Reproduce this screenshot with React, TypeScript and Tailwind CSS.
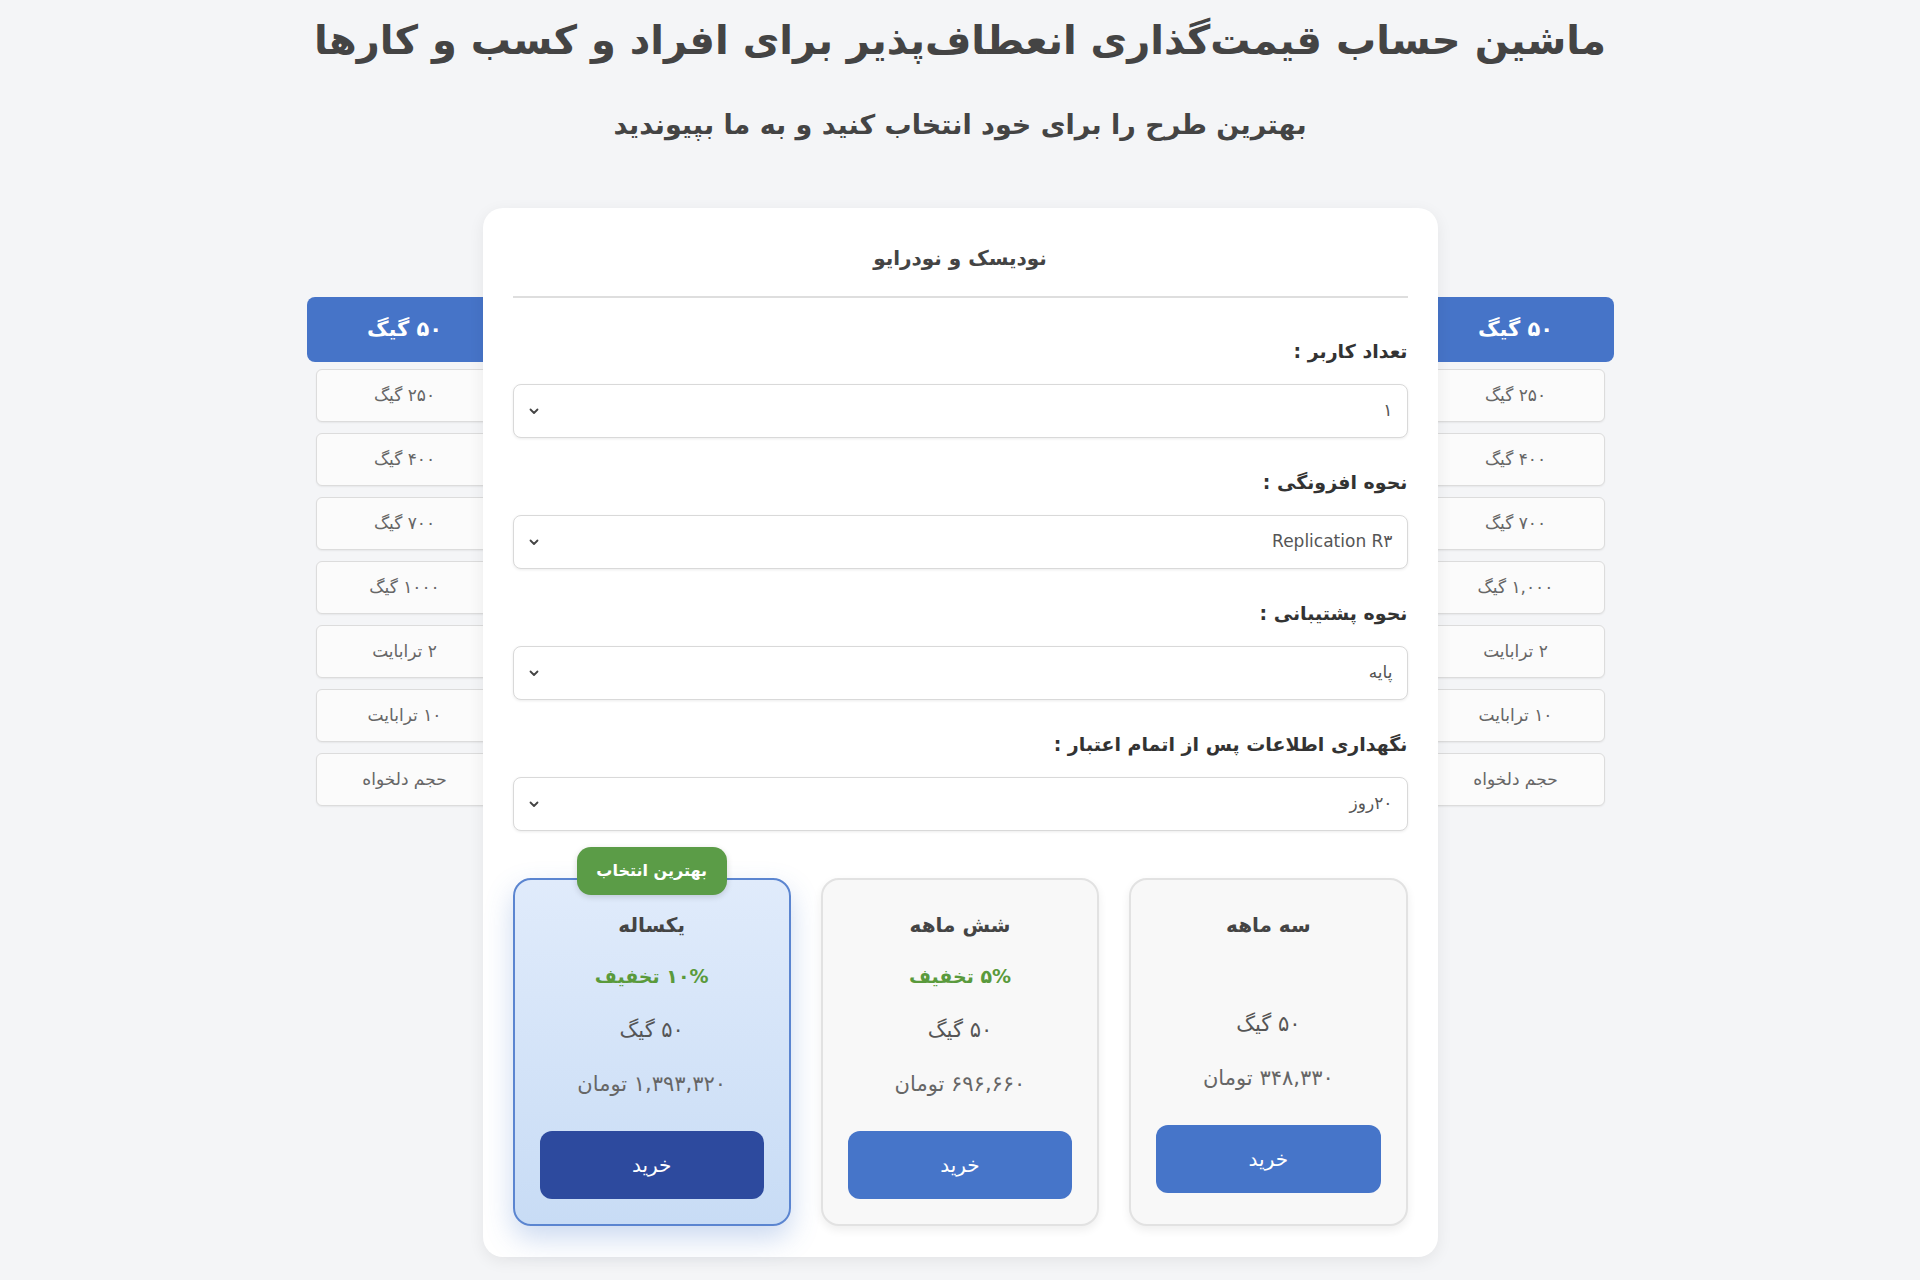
import React from 'react';

const FONT = "font-['DejaVu_Sans',sans-serif]";

const leftSizes = ['۲۵۰ گیگ', '۴۰۰ گیگ', '۷۰۰ گیگ', '۱۰۰۰ گیگ', '۲ ترابایت', '۱۰ ترابایت', 'حجم دلخواه'];
const rightSizes = ['۲۵۰ گیگ', '۴۰۰ گیگ', '۷۰۰ گیگ', '۱,۰۰۰ گیگ', '۲ ترابایت', '۱۰ ترابایت', 'حجم دلخواه'];

const SizeTable: React.FC<{ rows: string[]; side: 'left' | 'right' }> = ({ rows, side }) => (
  <div
    className={`w-[196px] shrink-0 mt-[89px] flex flex-col gap-[11px] ${
      side === 'left' ? '-mr-[20px]' : '-ml-[20px]'
    }`}
  >
    <div className="h-[65px] rounded-lg bg-[#4674c8] flex items-center justify-center text-white text-[21px] font-bold -mb-[4px]">
      ۵۰ گیگ
    </div>
    {rows.map((r) => (
      <div
        key={r}
        className="mx-[9px] h-[53px] rounded-md border border-[#dcdcdc] bg-[#fbfbfb] shadow-[0_1px_2px_rgba(0,0,0,0.06)] flex items-center justify-center text-[17px] text-[#666]"
      >
        {r}
      </div>
    ))}
  </div>
);

const Chevron = () => (
  <svg width="12" height="12" viewBox="0 0 12 12" fill="none">
    <path d="M2.5 4.5 6 8l3.5-3.5" stroke="#444" strokeWidth="1.8" strokeLinecap="round" strokeLinejoin="round" />
  </svg>
);

const Field: React.FC<{ label: string; value: string }> = ({ label, value }) => (
  <div className="flex flex-col">
    <label className="text-[19px] font-bold text-[#333] leading-[32px] mb-[17px]">{label}</label>
    <div className="h-[54px] rounded-lg border border-[#d9d9d9] bg-white shadow-[0_1px_3px_rgba(0,0,0,0.08)] flex items-center justify-between px-[14px] mb-[28px]">
      <span className="text-[17px] text-[#555]">{value}</span>
      <Chevron />
    </div>
  </div>
);

interface Plan {
  title: string;
  discount?: string;
  size: string;
  price: string;
  best?: boolean;
}

const plans: Plan[] = [
  { title: 'سه ماهه', size: '۵۰ گیگ', price: '۳۴۸,۳۳۰ تومان' },
  { title: 'شش ماهه', discount: '۵% تخفیف', size: '۵۰ گیگ', price: '۶۹۶,۶۶۰ تومان' },
  { title: 'یکساله', discount: '۱۰% تخفیف', size: '۵۰ گیگ', price: '۱,۳۹۳,۳۲۰ تومان', best: true },
];

const PlanCard: React.FC<{ plan: Plan }> = ({ plan }) => (
  <div
    className={`relative flex-1 h-[348px] rounded-[18px] flex flex-col items-center pt-[27px] px-[25px] ${
      plan.best
        ? 'border-2 border-[#5b85d0] bg-gradient-to-b from-[#e0ebfb] to-[#c8dcf5] shadow-[0_12px_28px_rgba(70,117,201,0.28)]'
        : 'border-2 border-[#e2e2e2] bg-[#f8f8f8] shadow-[0_4px_10px_rgba(0,0,0,0.07)]'
    }`}
  >
    {plan.best && (
      <div className="absolute -top-[33px] left-1/2 -translate-x-1/2 w-[150px] h-[48px] rounded-[14px] bg-[#5b9c47] text-white text-[16px] font-bold flex items-center justify-center shadow-[0_2px_6px_rgba(0,0,0,0.15)]">
        بهترین انتخاب
      </div>
    )}
    <div className="h-[36px] leading-[36px] text-[20px] font-bold text-[#444]">{plan.title}</div>
    {plan.discount ? (
      <div className="mt-[15px] h-[36px] leading-[36px] text-[19px] font-bold text-[#5a9a3c]">{plan.discount}</div>
    ) : (
      <div className="mt-[15px] h-[30px]" />
    )}
    <div className="mt-[18px] h-[36px] leading-[36px] text-[21px] text-[#555]">{plan.size}</div>
    <div className="mt-[18px] h-[36px] leading-[36px] text-[21px] text-[#666]">{plan.price}</div>
    <button
      className={`mt-[29px] w-full h-[68px] rounded-xl text-white text-[20px] ${
        plan.best ? 'bg-[#2d4a9e]' : 'bg-[#4675c9]'
      }`}
    >
      خرید
    </button>
  </div>
);

export default function App() {
  return (
    <div dir="rtl" className={`min-h-[1280px] bg-[#f4f5f7] ${FONT} pt-[12px]`}>
      <h1 className="text-center text-[40px] font-bold text-[#444] leading-[56px]">
        ماشین حساب قیمت‌گذاری انعطاف‌پذیر برای افراد و کسب و کارها
      </h1>
      <p className="text-center text-[27px] font-bold text-[#444] leading-[40px] mt-[37px]">
        بهترین طرح را برای خود انتخاب کنید و به ما بپیوندید
      </p>

      <div className="flex justify-center items-start mt-[63px]">
        <SizeTable rows={rightSizes} side="right" />
        <div className="relative z-10 w-[955px] shrink-0 bg-white rounded-[20px] shadow-[0_4px_16px_rgba(0,0,0,0.07)] px-[30px] pt-[34px] pb-[31px]">
          <div className="text-center text-[20px] font-bold text-[#444] leading-[32px] pb-[22px] border-b-2 border-[#dedede]">
            نودیسک و نودرایو
          </div>
          <div className="mt-[37px]">
            <Field label="تعداد کاربر :" value="۱" />
            <Field label="نحوه افزونگی :" value="Replication R۳" />
            <Field label="نحوه پشتیبانی :" value="پایه" />
            <Field label="نگهداری اطلاعات پس از اتمام اعتبار :" value="۲۰روز" />
          </div>
          <div className="flex gap-[30px] mt-[19px]">
            {plans.map((p) => (
              <PlanCard key={p.title} plan={p} />
            ))}
          </div>
        </div>
        <SizeTable rows={leftSizes} side="left" />
      </div>
    </div>
  );
}
